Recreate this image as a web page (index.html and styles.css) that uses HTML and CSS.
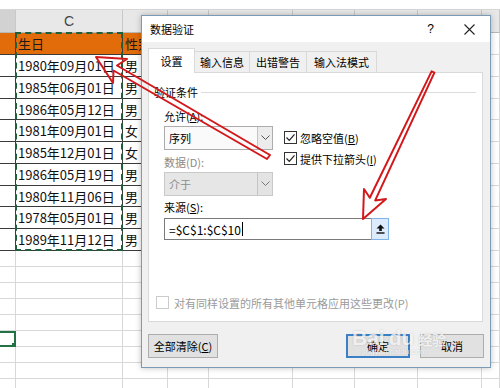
FILE: index.html
```html
<!DOCTYPE html>
<html lang="zh-CN">

<head>
    <meta charset="UTF-8">
    <title>数据验证</title>
    <link rel="stylesheet" href="styles.css">
</head>

<body>
    <div class="sheet">
        <div class="topbar"></div>

        <div class="row head">
            <div class="cell hd cur"></div>
            <div class="cell hd">C</div>
            <div class="cell hd"></div>
            <div class="cell hd"></div>
            <div class="cell hd"></div>
            <div class="cell hd"></div>
            <div class="cell hd"></div>
            <div class="cell hd"></div>
            <div class="cell hd"></div>
        </div>

        <div class="row r22 orange">
            <div class="cell b"></div>
            <div class="cell b">生日</div>
            <div class="cell b">性别</div>
            <div class="cell"></div><div class="cell"></div><div class="cell"></div><div class="cell"></div><div class="cell"></div><div class="cell"></div>
        </div>
        <div class="row r22">
            <div class="cell b"></div>
            <div class="cell b">1980年09月01日</div>
            <div class="cell b">男</div>
            <div class="cell"></div><div class="cell"></div><div class="cell"></div><div class="cell"></div><div class="cell"></div><div class="cell"></div>
        </div>
        <div class="row r22">
            <div class="cell b"></div>
            <div class="cell b">1985年06月01日</div>
            <div class="cell b">男</div>
            <div class="cell"></div><div class="cell"></div><div class="cell"></div><div class="cell"></div><div class="cell"></div><div class="cell"></div>
        </div>
        <div class="row r21">
            <div class="cell b"></div>
            <div class="cell b">1986年05月12日</div>
            <div class="cell b">男</div>
            <div class="cell"></div><div class="cell"></div><div class="cell"></div><div class="cell"></div><div class="cell"></div><div class="cell"></div>
        </div>
        <div class="row r22">
            <div class="cell b"></div>
            <div class="cell b">1981年09月01日</div>
            <div class="cell b">女</div>
            <div class="cell"></div><div class="cell"></div><div class="cell"></div><div class="cell"></div><div class="cell"></div><div class="cell"></div>
        </div>
        <div class="row r22">
            <div class="cell b"></div>
            <div class="cell b">1985年12月01日</div>
            <div class="cell b">女</div>
            <div class="cell"></div><div class="cell"></div><div class="cell"></div><div class="cell"></div><div class="cell"></div><div class="cell"></div>
        </div>
        <div class="row r22">
            <div class="cell b"></div>
            <div class="cell b">1986年05月19日</div>
            <div class="cell b">男</div>
            <div class="cell"></div><div class="cell"></div><div class="cell"></div><div class="cell"></div><div class="cell"></div><div class="cell"></div>
        </div>
        <div class="row r21">
            <div class="cell b"></div>
            <div class="cell b">1980年11月06日</div>
            <div class="cell b">男</div>
            <div class="cell"></div><div class="cell"></div><div class="cell"></div><div class="cell"></div><div class="cell"></div><div class="cell"></div>
        </div>
        <div class="row r22">
            <div class="cell b"></div>
            <div class="cell b">1978年05月01日</div>
            <div class="cell b">男</div>
            <div class="cell"></div><div class="cell"></div><div class="cell"></div><div class="cell"></div><div class="cell"></div><div class="cell"></div>
        </div>
        <div class="row r22">
            <div class="cell b"></div>
            <div class="cell b">1989年11月12日</div>
            <div class="cell b">男</div>
            <div class="cell"></div><div class="cell"></div><div class="cell"></div><div class="cell"></div><div class="cell"></div><div class="cell"></div>
        </div>

        <div class="row r16"><div class="cell"></div><div class="cell"></div><div class="cell"></div><div class="cell"></div><div class="cell"></div><div class="cell"></div><div class="cell"></div><div class="cell"></div><div class="cell"></div></div>
        <div class="row r16"><div class="cell"></div><div class="cell"></div><div class="cell"></div><div class="cell"></div><div class="cell"></div><div class="cell"></div><div class="cell"></div><div class="cell"></div><div class="cell"></div></div>
        <div class="row r16"><div class="cell"></div><div class="cell"></div><div class="cell"></div><div class="cell"></div><div class="cell"></div><div class="cell"></div><div class="cell"></div><div class="cell"></div><div class="cell"></div></div>
        <div class="row r16"><div class="cell"></div><div class="cell"></div><div class="cell"></div><div class="cell"></div><div class="cell"></div><div class="cell"></div><div class="cell"></div><div class="cell"></div><div class="cell"></div></div>
        <div class="row r16"><div class="cell"></div><div class="cell"></div><div class="cell"></div><div class="cell"></div><div class="cell"></div><div class="cell"></div><div class="cell"></div><div class="cell"></div><div class="cell"></div></div>
        <div class="row r16"><div class="cell active"></div><div class="cell"></div><div class="cell"></div><div class="cell"></div><div class="cell"></div><div class="cell"></div><div class="cell"></div><div class="cell"></div><div class="cell"></div></div>
        <div class="row r16"><div class="cell"></div><div class="cell"></div><div class="cell"></div><div class="cell"></div><div class="cell"></div><div class="cell"></div><div class="cell"></div><div class="cell"></div><div class="cell"></div></div>
        <div class="row r16"><div class="cell"></div><div class="cell"></div><div class="cell"></div><div class="cell"></div><div class="cell"></div><div class="cell"></div><div class="cell"></div><div class="cell"></div><div class="cell"></div></div>
        <div class="row r16"><div class="cell"></div><div class="cell"></div><div class="cell"></div><div class="cell"></div><div class="cell"></div><div class="cell"></div><div class="cell"></div><div class="cell"></div><div class="cell"></div></div>

        <!-- copy range marquee -->
        <div class="marquee"></div>
    </div>

    <div class="dialog">
        <div class="title">
            <span class="title-text">数据验证</span>
            <span class="help">?</span>
            <svg class="close" width="11" height="11" viewBox="0 0 11 11">
                <path d="M0.5 0.5 L10.5 10.5 M10.5 0.5 L0.5 10.5" stroke="#222" stroke-width="1.1" fill="none" />
            </svg>
        </div>

        <div class="body">
            <div class="tabs">
                <div class="tab active w47">设置</div>
                <div class="tab w55">输入信息</div>
                <div class="tab w57">出错警告</div>
                <div class="tab w70">输入法模式</div>
            </div>

            <div class="panel">
                <div class="group-title">
                    <span>验证条件</span>
                    <span class="rule"></span>
                </div>

                <div class="criteria">
                    <div class="left">
                        <div class="label">允许(<u>A</u>):</div>
                        <div class="combo">
                            <span class="combo-text">序列</span>
                            <span class="combo-btn">
                                <svg width="9" height="6" viewBox="0 0 9 6"><path d="M0.5 0.5 L4.5 4.5 L8.5 0.5" stroke="#555" fill="none" /></svg>
                            </span>
                        </div>
                        <div class="label dim">数据(D):</div>
                        <div class="combo disabled">
                            <span class="combo-text">介于</span>
                            <span class="combo-btn">
                                <svg width="9" height="6" viewBox="0 0 9 6"><path d="M0.5 0.5 L4.5 4.5 L8.5 0.5" stroke="#777" fill="none" /></svg>
                            </span>
                        </div>
                    </div>
                    <div class="right">
                        <div class="check">
                            <span class="box"><svg width="11" height="11" viewBox="0 0 11 11"><path d="M1.5 5.5 L4.3 8.3 L9.5 2.3" stroke="#222" stroke-width="1.2" fill="none" /></svg></span>
                            <span>忽略空值(<u>B</u>)</span>
                        </div>
                        <div class="check">
                            <span class="box"><svg width="11" height="11" viewBox="0 0 11 11"><path d="M1.5 5.5 L4.3 8.3 L9.5 2.3" stroke="#222" stroke-width="1.2" fill="none" /></svg></span>
                            <span>提供下拉箭头(<u>I</u>)</span>
                        </div>
                    </div>
                </div>

                <div class="label source-label">来源(<u>S</u>):</div>
                <div class="source">
                    <div class="source-input">=$C$1:$C$10<span class="caret"></span></div>
                    <div class="source-btn">
                        <svg width="9" height="10" viewBox="0 0 9 10">
                            <path d="M4.5 0.5 L8.5 4.5 L5.8 4.5 L5.8 7 L3.2 7 L3.2 4.5 L0.5 4.5 Z" fill="#111" />
                            <rect x="0.5" y="8.3" width="8" height="1.4" fill="#111" />
                        </svg>
                    </div>
                </div>

                <div class="check apply">
                    <span class="box off"></span>
                    <span>对有同样设置的所有其他单元格应用这些更改(P)</span>
                </div>
            </div>

            <div class="buttons">
                <div class="btn wide">全部清除(<u>C</u>)</div>
                <div class="spacer"></div>
                <div class="btn primary">确定</div>
                <div class="btn">取消</div>
            </div>
        </div>
    </div>

    <div class="watermark">
        <span class="wm-big">Bai</span><span class="wm-big">du</span><span class="wm-cn">经验</span>
        <div class="wm-url">jingyan.baidu.com</div>
    </div>

    <svg class="arrows" width="500" height="388" viewBox="0 0 500 388">
        <polygon points="96,57 127,59 117,65.5 270,155 267,159 113.5,70.5 113,83"
            fill="none" stroke="#d3181c" stroke-width="2" stroke-linejoin="round" />
        <polygon points="363,219 364,189 369.8,197.8 431.6,71.4 434.4,72.6 375.2,200.4 386,199"
            fill="none" stroke="#d3181c" stroke-width="2" stroke-linejoin="round" />
    </svg>
</body>

</html>
```

FILE: styles.css
```css
body {
    margin: 0;
    width: 500px;
    height: 388px;
    overflow: hidden;
    background-color: #fff;
    font-family: "Noto Sans CJK SC", "Liberation Sans", sans-serif;
    position: relative;
}

/* spreadsheet */
.sheet {
    position: relative;
}

.topbar {
    height: 10px;
    border-bottom: 1px solid #d6d6d6;
    box-sizing: border-box;
}

.row {
    display: grid;
    grid-template-columns: 16px 107px 45px 41px 84px 62px 63px 64px 18px;
}

.cell {
    box-sizing: border-box;
    border-right: 1px solid #d8d8d8;
    border-bottom: 1px solid #d8d8d8;
    font-size: 13px;
    color: #111;
    padding-left: 2px;
    white-space: nowrap;
    overflow: hidden;
    display: flex;
    align-items: center;
    position: relative;
}

.head {
    height: 23px;
}

.hd {
    background-color: #e8e8e8;
    border-right-color: #c8c8c8;
    border-bottom-color: #b8b8b8;
    justify-content: center;
    padding-left: 0;
    color: #444;
    font-family: "Liberation Sans", sans-serif;
    font-size: 14px;
}

.hd.cur {
    background-color: #d2d2d2;
}

.r22 { height: 22px; }
.r21 { height: 21px; }
.r16 { height: 16px; }

.cell.b {
    border-right-color: #3a3a3a;
    border-bottom-color: #3a3a3a;
}

.orange .cell.b {
    background-color: #e26b0a;
    color: #1a1a1a;
}

.cell.active {
    border: 2px solid #217346;
    border-left: none;
}

.cell.active::after {
    content: "";
    position: absolute;
    right: -4px;
    bottom: -4px;
    width: 5px;
    height: 5px;
    background-color: #217346;
    border: 1px solid #fff;
}

.marquee {
    position: absolute;
    left: 15px;
    top: 32px;
    width: 108px;
    height: 219px;
    border: 2px dashed #1f5f3c;
    box-sizing: border-box;
}

/* dialog */
.dialog {
    position: absolute;
    left: 141px;
    top: 15px;
    width: 350px;
    height: 353px;
    box-sizing: border-box;
    border: 1px solid #7a9ab5;
    background-color: #f0f0f0;
    box-shadow: 0 0 6px rgba(0, 0, 0, 0.25);
    display: flex;
    flex-direction: column;
    font-size: 11px;
    color: #000;
}

.title {
    height: 26px;
    background-color: #fff;
    display: flex;
    align-items: center;
    padding-left: 8px;
}

.title-text {
    flex: 1;
    font-size: 11px;
}

.help {
    font-family: "Liberation Sans", sans-serif;
    font-size: 12px;
    margin-right: 30px;
}

.close {
    margin-right: 15px;
}

.body {
    padding: 6px 0 0 6px;
}

.tabs {
    display: flex;
    align-items: flex-end;
    height: 24px;
}

.tab {
    height: 21px;
    box-sizing: border-box;
    border: 1px solid #d9d9d9;
    border-bottom: none;
    margin-left: -1px;
    display: flex;
    align-items: center;
    justify-content: center;
    background-color: #f0f0f0;
}

.tab.active {
    height: 25px;
    margin-left: 0;
    margin-bottom: -1px;
    background-color: #fff;
    position: relative;
    z-index: 1;
}

.w47 { width: 47px; }
.w55 { width: 56px; }
.w57 { width: 58px; }
.w70 { width: 71px; }

.panel {
    width: 335px;
    height: 250px;
    box-sizing: border-box;
    background-color: #fff;
    border: 1px solid #d9d9d9;
    padding: 0 6px 12px 5px;
    display: flex;
    flex-direction: column;
}

.group-title {
    margin-top: 12px;
    height: 14px;
    display: flex;
    align-items: center;
    gap: 3px;
}

.rule {
    flex: 1;
    border-top: 1px solid #dcdcdc;
}

.label {
    height: 14px;
    line-height: 14px;
    padding-left: 10px;
}

.dim {
    color: #8a8a8a;
}

.criteria {
    display: flex;
    margin-top: 10px;
}

.left {
    width: 109px;
    padding-left: 10px;
}

.left .label {
    padding-left: 0;
}

.combo {
    margin-top: 3px;
    height: 24px;
    box-sizing: border-box;
    border: 1px solid #acacac;
    background-color: #fafafa;
    display: flex;
}

.left .label.dim {
    margin-top: 5px;
}

.combo-text {
    flex: 1;
    padding-left: 4px;
    display: flex;
    align-items: center;
}

.combo-btn {
    width: 14px;
    border-left: 1px solid #c4c4c4;
    background-color: #ececec;
    display: flex;
    align-items: center;
    justify-content: center;
}

.combo.disabled {
    background-color: #e6e6e6;
    border-color: #c9c9c9;
    color: #8d8d8d;
}

.combo.disabled .combo-btn {
    background-color: #e3e3e3;
}

.right {
    margin-left: 11px;
    padding-top: 22px;
}

.check {
    display: flex;
    align-items: center;
    gap: 3px;
    height: 13px;
    margin-bottom: 8px;
}

.box {
    width: 13px;
    height: 13px;
    box-sizing: border-box;
    border: 1px solid #333;
    background-color: #fff;
    display: flex;
    align-items: center;
    justify-content: center;
}

.box.off {
    border-color: #cccccc;
}

.source-label {
    margin-top: 4px;
}

.source {
    margin-top: 4px;
    margin-left: 10px;
    display: flex;
    height: 22px;
}

.source-input {
    width: 207px;
    box-sizing: border-box;
    border: 1px solid #7a7a7a;
    border-right: none;
    padding-left: 4px;
    display: flex;
    align-items: center;
    font-size: 12px;
}

.caret {
    width: 1px;
    height: 14px;
    background-color: #000;
    margin-left: 1px;
}

.source-btn {
    width: 18px;
    box-sizing: border-box;
    border: 1px solid #7eb4ea;
    background-color: #dcecfc;
    display: flex;
    align-items: center;
    justify-content: center;
}

.apply {
    margin-top: auto;
    margin-bottom: 0;
    margin-left: 2px;
    color: #9a9a9a;
    gap: 5px;
}

.buttons {
    margin-top: 12px;
    display: flex;
    width: 336px;
}

.btn {
    width: 64px;
    height: 24px;
    box-sizing: border-box;
    border: 1px solid #adadad;
    background-color: #e1e1e1;
    display: flex;
    align-items: center;
    justify-content: center;
    margin-left: 10px;
}

.btn.wide {
    width: 70px;
    margin-left: 0;
}

.btn.primary {
    border: 2px solid #3b7fc4;
}

.spacer {
    flex: 1;
}

/* watermark */
.watermark {
    position: absolute;
    left: 352px;
    top: 326px;
    color: rgba(255, 255, 255, 0.75);
    text-shadow: 0 0 2px rgba(0, 0, 0, 0.18);
    font-family: "Liberation Sans", sans-serif;
    font-weight: bold;
}

.wm-big {
    font-size: 21px;
    margin-right: 4px;
}

.wm-cn {
    font-family: "Noto Sans CJK SC", sans-serif;
    font-size: 14px;
}

.wm-url {
    font-size: 8px;
    font-weight: normal;
    margin-left: 10px;
    margin-top: -3px;
}

.arrows {
    position: absolute;
    left: 0;
    top: 0;
    pointer-events: none;
}
```
